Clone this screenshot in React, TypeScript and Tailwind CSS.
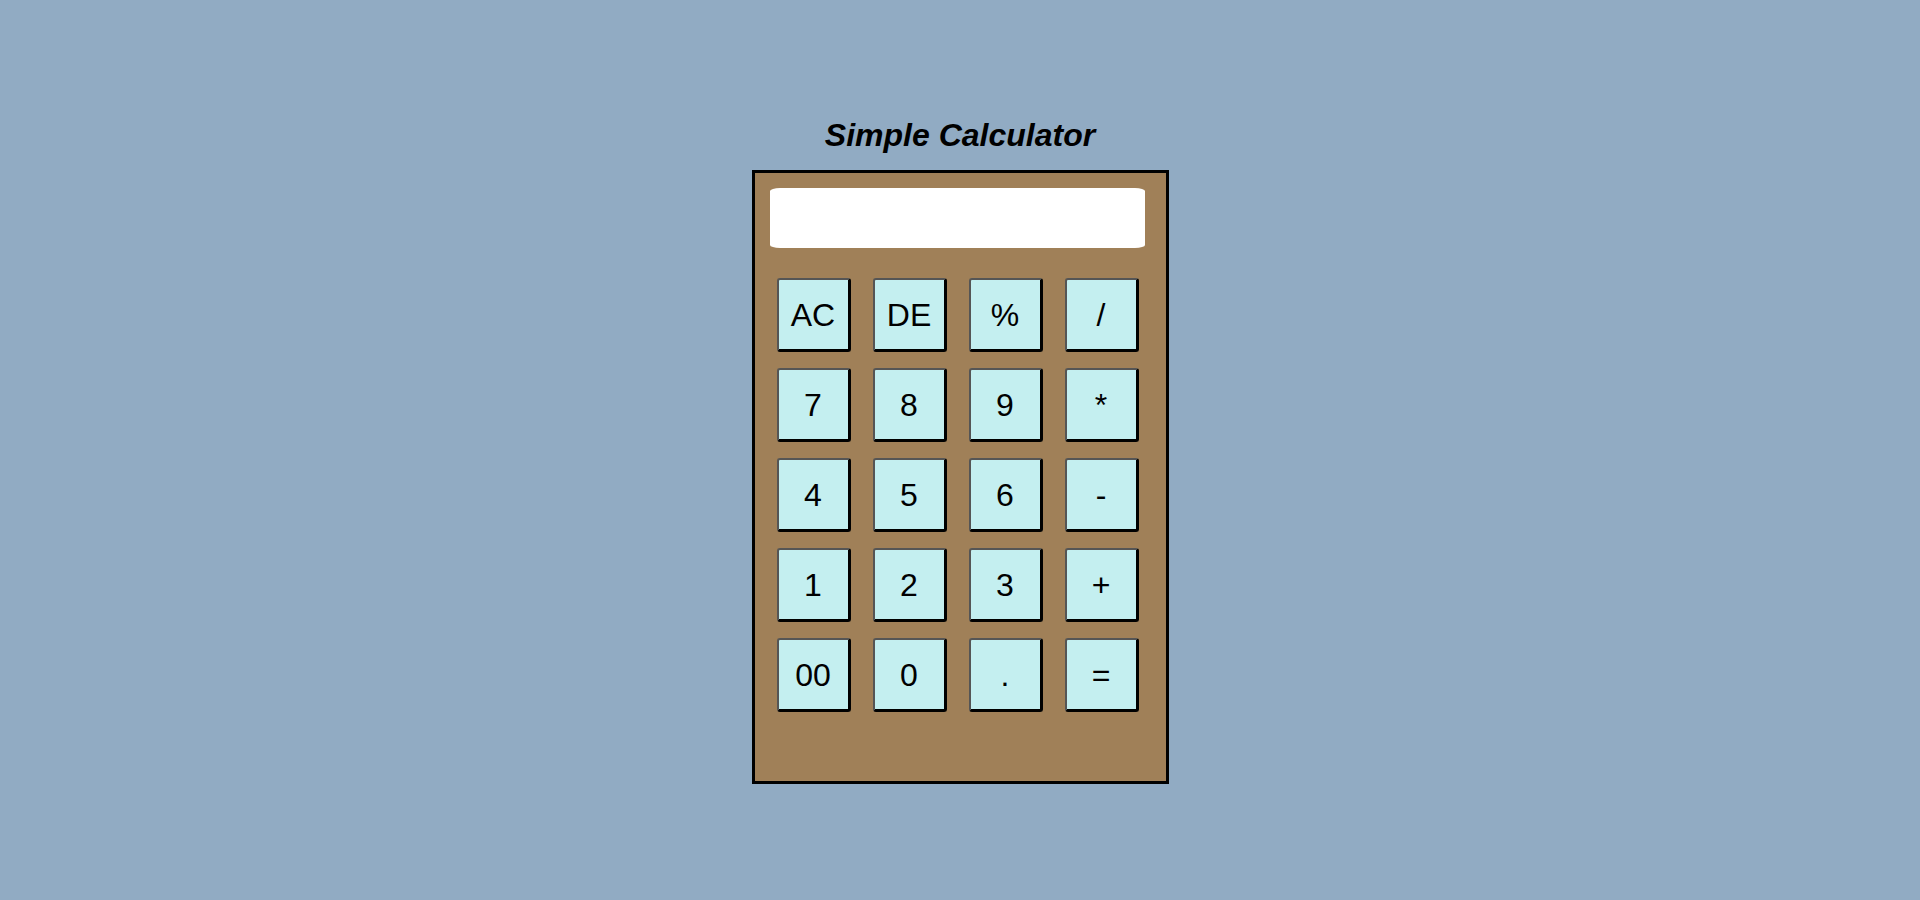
import React from "react";

const keys = [
  ["AC", "DE", "%", "/"],
  ["7", "8", "9", "*"],
  ["4", "5", "6", "-"],
  ["1", "2", "3", "+"],
  ["00", "0", ".", "="],
];

export default function App() {
  return (
    <div
      className="min-h-[900px] w-full bg-[#91abc3] flex flex-col items-center"
      style={{ fontFamily: '"Liberation Sans", Arial, sans-serif' }}
    >
      <h1 className="mt-[117px] text-[32px] leading-[37px] font-bold italic text-black">
        Simple Calculator
      </h1>
      <div className="mt-[16px] w-[417px] h-[614px] border-[3px] border-black bg-[#a08058] pt-[15px] pl-[15px]">
        <input
          readOnly
          className="block w-[375px] h-[60px] bg-white rounded-[10px/3px] outline-none border-0"
        />
        <div className="mt-[30px] ml-[7px] grid grid-cols-[repeat(4,74px)] gap-x-[22px] gap-y-[16px]">
          {keys.flat().map((k) => (
            <button
              key={k}
              className="w-[74px] h-[74px] bg-[#c4eff0] text-black text-[32px] leading-none border-t-2 border-l-2 border-b-[3px] border-r-[3px] border-t-[#555] border-l-[#555] border-b-black border-r-black rounded-[3px] flex items-center justify-center"
            >
              {k}
            </button>
          ))}
        </div>
      </div>
    </div>
  );
}
